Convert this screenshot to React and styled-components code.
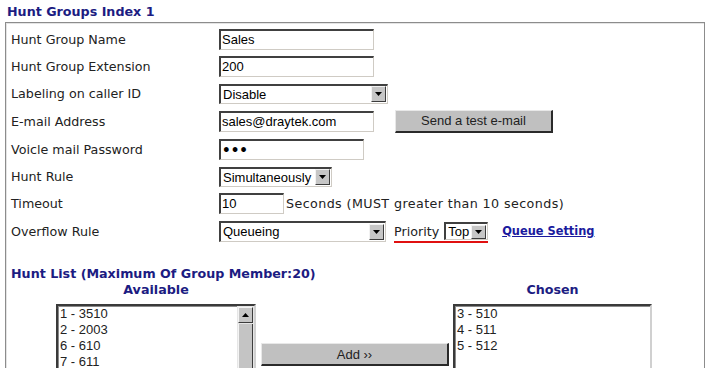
import React from "react";
import styled, { createGlobalStyle } from "styled-components";

const GlobalStyle = createGlobalStyle`
  html, body {
    margin: 0;
    padding: 0;
    background: #fff;
    overflow: hidden;
  }
`;

const Page = styled.div`
  padding: 4px 0 0 5px;
  font-family: "DejaVu Sans", Verdana, sans-serif;
  font-size: 12.7px;
  color: #222;
`;

const Title = styled.div`
  margin: 0 0 2px 2px;
  height: 16px;
  line-height: 16px;
  font-weight: bold;
  color: #1c1c82;
`;

const Box = styled.div`
  box-sizing: border-box;
  width: 700px;
  height: 420px;
  padding: 2px 0 0 0;
  border: 1px solid #8c8c8c;
  box-shadow: inset 1px 1px 0 #e4e4e4;
`;

const Row = styled.div`
  display: grid;
  grid-template-columns: 208px auto;
  align-items: center;
  height: ${(p) => p.h}px;
  padding-left: 5px;
`;

const Label = styled.span`
  white-space: nowrap;
`;

const Field = styled.div`
  display: flex;
  align-items: center;
`;

const TextInput = styled.div`
  box-sizing: border-box;
  width: ${(p) => p.w}px;
  height: 21px;
  padding: 1px 0 0 1px;
  border-style: solid;
  border-width: 2px 1px 1px 2px;
  border-color: #404040 #cfcbc4 #cfcbc4 #404040;
  font: 13px "Liberation Sans", Arial, sans-serif;
  line-height: 16px;
  color: #000;
  white-space: nowrap;
`;

const Dots = styled.span`
  font: bold 13.5px "DejaVu Sans", sans-serif;
  line-height: 16px;
`;

const SelectBox = styled.div`
  box-sizing: border-box;
  display: inline-flex;
  align-items: center;
  width: ${(p) => p.w}px;
  height: ${(p) => p.h || 20}px;
  padding-left: 2px;
  border-style: solid;
  border-width: 2px 1px 1px 2px;
  border-color: #404040 #cfcbc4 #cfcbc4 #404040;
  background: #fff;
  font: 13px "Liberation Sans", Arial, sans-serif;
  color: #000;
`;

const SelectText = styled.span`
  flex: 1;
  white-space: nowrap;
  overflow: hidden;
`;

const DropButton = styled.span`
  box-sizing: border-box;
  display: flex;
  align-items: center;
  justify-content: center;
  width: 15px;
  height: ${(p) => p.h || 16}px;
  margin-right: 1px;
  background: #c6c6c6;
  border: 1px solid;
  border-color: #f2f2f2 #3c3c3c #3c3c3c #f2f2f2;
`;

const GrayButton = styled.div`
  box-sizing: border-box;
  display: flex;
  align-items: center;
  justify-content: center;
  width: ${(p) => p.w}px;
  height: 23px;
  margin-left: ${(p) => p.ml || 0}px;
  background: #c0c0c0;
  border-style: solid;
  border-width: 1px 2px 2px 1px;
  border-color: #e8e8e8 #2a2a2a #2a2a2a #e8e8e8;
  font: 13px "Liberation Sans", Arial, sans-serif;
  color: #222;
  white-space: nowrap;
`;

const Note = styled.span`
  margin-left: ${(p) => p.ml || 0}px;
  letter-spacing: ${(p) => p.ls || 0}px;
  white-space: nowrap;
`;

const Marked = styled.span`
  display: inline-flex;
  align-items: center;
  margin-left: 8px;
  height: 19px;
  margin-top: 2px;
  border-bottom: 2px solid #e01010;
`;

const QueueLink = styled.a`
  margin-left: 14px;
  font-size: 11.4px;
  font-weight: bold;
  color: #1a1a9e;
  text-decoration: underline;
  white-space: nowrap;
`;

const SubTitle = styled.div`
  margin: 21px 0 0 5px;
  height: 16px;
  line-height: 16px;
  font-weight: bold;
  color: #1c1c82;
`;

const Columns = styled.div`
  display: grid;
  grid-template-columns: 200px 187px 199px;
  column-gap: 5px;
  padding-left: 50px;
  margin-top: ${(p) => p.mt || 0}px;
`;

const ColHead = styled.div`
  height: 16px;
  line-height: 16px;
  text-align: center;
  font-weight: bold;
  color: #1c1c82;
  grid-column: ${(p) => p.col};
`;

const ListBox = styled.div`
  box-sizing: border-box;
  display: flex;
  height: 90px;
  border-style: solid;
  border-width: 2px 2px 1px 2px;
  border-color: #3a3a3a #d0d0d0 #d0d0d0 #3a3a3a;
  box-shadow: inset 1px 1px 0 #8a8a8a;
  background: #fff;
`;

const Items = styled.div`
  flex: 1;
  padding: 0 0 0 2px;
  font: 13px "Liberation Sans", Arial, sans-serif;
  line-height: 16px;
  color: #222;
`;

const ScrollBar = styled.div`
  display: flex;
  flex-direction: column;
  width: 17px;
  background: #e6e6e6;
`;

const ScrollArrow = styled.div`
  box-sizing: border-box;
  display: flex;
  align-items: center;
  justify-content: center;
  height: 16px;
  margin: 1px 1px 0 1px;
  background: #c6c6c6;
  border: 1px solid;
  border-color: #f4f4f4 #3c3c3c #3c3c3c #f4f4f4;
`;

const ScrollThumb = styled.div`
  flex: 1;
  margin: 1px 1px 0 1px;
  background: #c4c4c4;
  border-left: 1px solid #f4f4f4;
  border-right: 1px solid #3c3c3c;
`;

const AddCell = styled.div`
  padding-top: 39px;
`;

const Arrow = ({ up }) => (
  <svg width="7" height="4" viewBox="0 0 7 4">
    <polygon points={up ? "0,4 7,4 3.5,0" : "0,0 7,0 3.5,4"} fill="#000" />
  </svg>
);

const Select = ({ w, h, bh, children }) => (
  <SelectBox w={w} h={h}>
    <SelectText>{children}</SelectText>
    <DropButton h={bh}>
      <Arrow />
    </DropButton>
  </SelectBox>
);

export default function App() {
  return (
    <>
      <GlobalStyle />
      <Page>
        <Title>Hunt Groups Index 1</Title>
        <Box>
          <Row h={28}>
            <Label>Hunt Group Name</Label>
            <Field>
              <TextInput w={155}>Sales</TextInput>
            </Field>
          </Row>
          <Row h={27}>
            <Label>Hunt Group Extension</Label>
            <Field>
              <TextInput w={155}>200</TextInput>
            </Field>
          </Row>
          <Row h={27}>
            <Label>Labeling on caller ID</Label>
            <Field>
              <Select w={169}>Disable</Select>
            </Field>
          </Row>
          <Row h={28}>
            <Label>E-mail Address</Label>
            <Field>
              <TextInput w={155}>sales@draytek.com</TextInput>
              <GrayButton w={158} ml={21}>
                Send a test e-mail
              </GrayButton>
            </Field>
          </Row>
          <Row h={28}>
            <Label>Voicle mail Password</Label>
            <Field>
              <TextInput w={145}>
                <Dots>•••</Dots>
              </TextInput>
            </Field>
          </Row>
          <Row h={27}>
            <Label>Hunt Rule</Label>
            <Field>
              <Select w={113}>Simultaneously</Select>
            </Field>
          </Row>
          <Row h={27}>
            <Label>Timeout</Label>
            <Field>
              <TextInput w={65}>10</TextInput>
              <Note ml={2} ls={0.4}>
                Seconds (MUST greater than 10 seconds)
              </Note>
            </Field>
          </Row>
          <Row h={28}>
            <Label>Overflow Rule</Label>
            <Field>
              <Select w={167} h={21}>
                Queueing
              </Select>
              <Marked>
                <Note>Priority</Note>
                <Note ml={5}>
                  <Select w={44} h={18} bh={14}>
                    Top
                  </Select>
                </Note>
              </Marked>
              <QueueLink href="#">Queue Setting</QueueLink>
            </Field>
          </Row>

          <SubTitle>Hunt List (Maximum Of Group Member:20)</SubTitle>
          <Columns>
            <ColHead col={1}>Available</ColHead>
            <ColHead col={3}>Chosen</ColHead>
          </Columns>
          <Columns mt={6}>
            <ListBox>
              <Items>
                <div>1 - 3510</div>
                <div>2 - 2003</div>
                <div>6 - 610</div>
                <div>7 - 611</div>
              </Items>
              <ScrollBar>
                <ScrollArrow>
                  <Arrow up />
                </ScrollArrow>
                <ScrollThumb />
              </ScrollBar>
            </ListBox>
            <AddCell>
              <GrayButton w={188}>Add ››</GrayButton>
            </AddCell>
            <ListBox>
              <Items>
                <div>3 - 510</div>
                <div>4 - 511</div>
                <div>5 - 512</div>
              </Items>
            </ListBox>
          </Columns>
        </Box>
      </Page>
    </>
  );
}
